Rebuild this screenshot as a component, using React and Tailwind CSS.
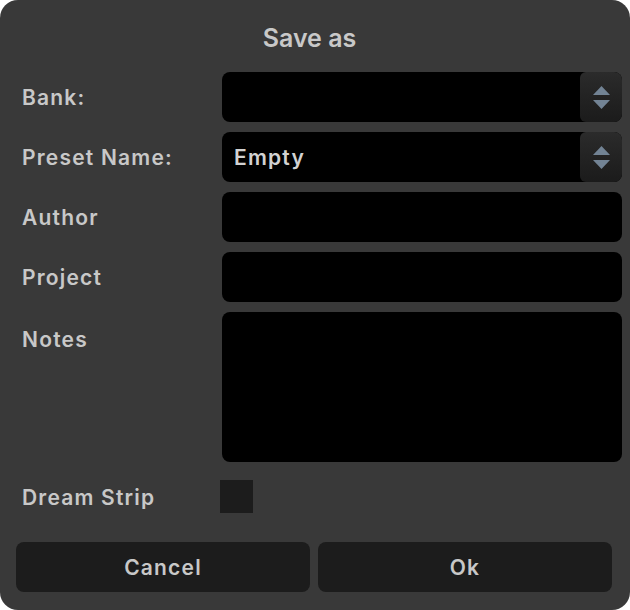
const font = { fontFamily: 'Inter, "DejaVu Sans", sans-serif' };

const Spinner = () => (
  <div className="flex w-[42px] flex-col items-center justify-center gap-[5px] rounded-[6px] bg-gradient-to-b from-[#2b2b2b] to-[#1b1b1b]">
    <svg width="17" height="9" viewBox="0 0 17 9">
      <path d="M8.5 0 L17 9 L0 9 Z" fill="#728394" />
    </svg>
    <svg width="17" height="9" viewBox="0 0 17 9">
      <path d="M0 0 L17 0 L8.5 9 Z" fill="#728394" />
    </svg>
  </div>
);

const Row = ({ label, children, top }) => (
  <div className={`flex ${top ? "items-start" : "items-center"}`}>
    <div
      className={`w-[222px] shrink-0 pl-[22px] text-[21px] font-semibold tracking-[1.2px] text-[#c8c8c8] ${top ? "pt-[12px]" : "pt-[2px]"}`}
    >
      {label}
    </div>
    {children}
  </div>
);

const Field = ({ value, spinner, tall }) => (
  <div
    className={`flex flex-1 overflow-hidden rounded-[8px] bg-black ${tall ? "h-[150px]" : "h-[50px]"}`}
  >
    <div className="flex flex-1 items-center px-[12px] pt-[2px] text-[21px] font-semibold tracking-[1.2px] text-[#d2d2d2]">
      {value}
    </div>
    {spinner && <Spinner />}
  </div>
);

export default function App() {
  return (
    <div className="h-[610px] w-[630px] bg-white" style={font}>
      <div className="flex h-full w-full flex-col rounded-[18px] bg-[#393939]">
        <div className="pr-[11px] pt-[20px] text-center text-[25px] font-semibold leading-[36px] text-[#c8c8c8]">
          Save as
        </div>
        <div className="mt-[16px] flex flex-col gap-[10px] pr-[8px]">
          <Row label="Bank:">
            <Field spinner />
          </Row>
          <Row label="Preset Name:">
            <Field value="Empty" spinner />
          </Row>
          <Row label="Author">
            <Field />
          </Row>
          <Row label="Project">
            <Field />
          </Row>
          <Row label="Notes" top>
            <Field tall />
          </Row>
        </div>
        <div className="mt-[18px] flex h-[33px] items-center">
          <div className="w-[220px] shrink-0 pl-[22px] pt-[2px] text-[21px] font-semibold tracking-[1.2px] text-[#c8c8c8]">
            Dream Strip
          </div>
          <div className="h-[33px] w-[33px] bg-[#1c1c1c]" />
        </div>
        <div className="mt-[29px] flex gap-[8px] pl-[16px] pr-[18px]">
          <button className="h-[50px] flex-1 rounded-[8px] bg-[#1c1c1c] pt-[2px] text-[21px] font-semibold tracking-[1.2px] text-[#c8c8c8]">
            Cancel
          </button>
          <button className="h-[50px] flex-1 rounded-[8px] bg-[#1c1c1c] pt-[2px] text-[21px] font-semibold tracking-[1.2px] text-[#c8c8c8]">
            Ok
          </button>
        </div>
      </div>
    </div>
  );
}
